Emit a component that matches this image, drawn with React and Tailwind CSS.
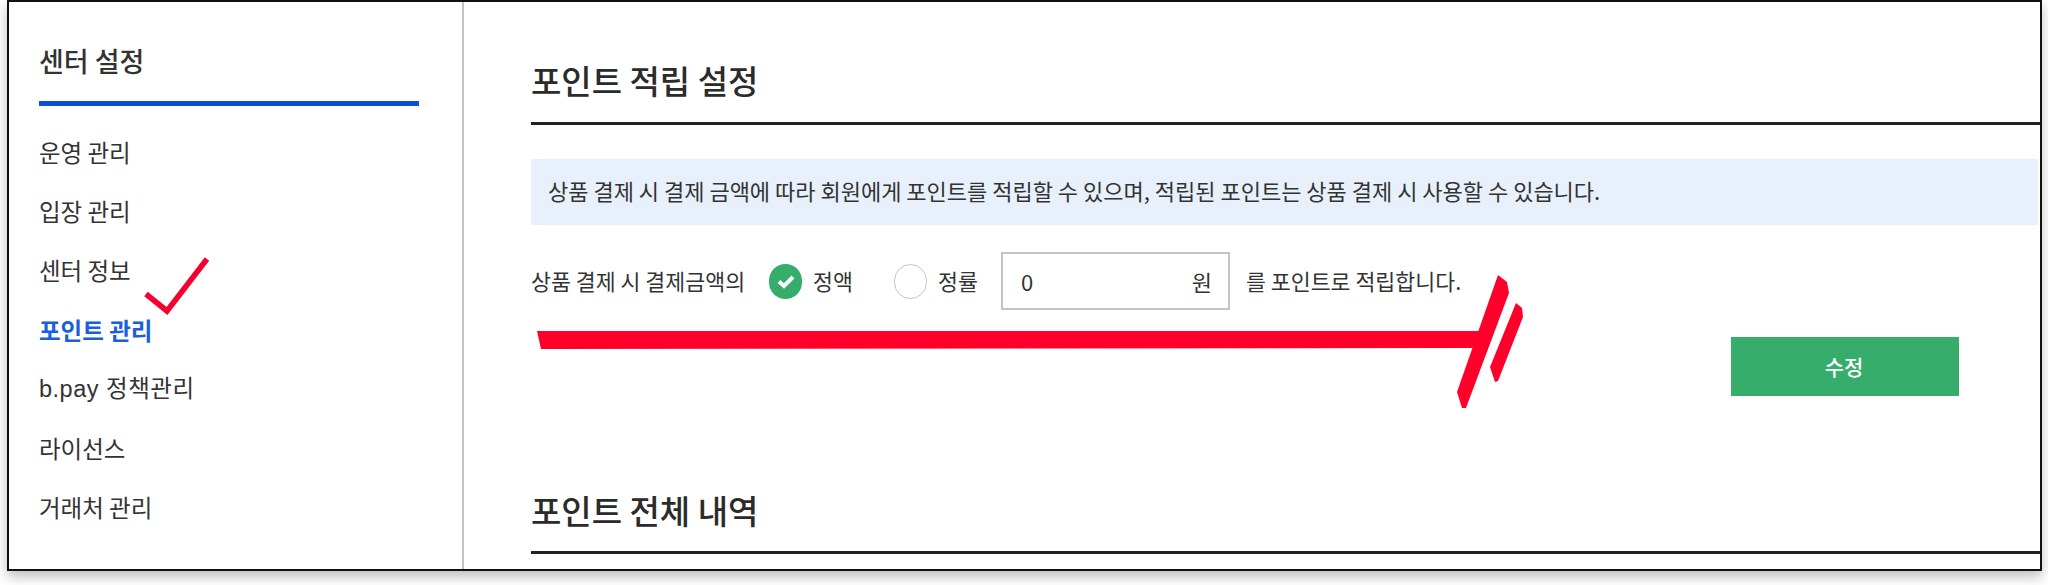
const FONT = "font-['Noto_Sans_CJK_KR','Noto_Sans',sans-serif]";

const menuItems = ["운영 관리", "입장 관리", "센터 정보", "포인트 관리", "b.pay 정책관리", "라이선스", "거래처 관리"];

const Annotations = () => (
  <svg className="pointer-events-none absolute left-0 top-0" width="2048" height="585" viewBox="0 0 2048 585">
    <path d="M146 294 L167 311 L207 259" fill="none" stroke="#f5002f" strokeWidth="5.5" />
    <path d="M537 331 L1482 331 L1474 348 L541 349 Z" fill="#ff002b" />
    <path d="M1498 275 L1507 282 L1509 293 L1466 408 L1462 408 L1457 392 Z" fill="#ff002b" />
    <path d="M1516 303 L1522 308 L1523 317 L1498 381 L1495 382 L1490 367 Z" fill="#ff002b" />
  </svg>
);

const SectionTitle = ({ children, className = "" }) => (
  <h2 className={`border-b-[3px] border-[#222222] text-[33px] font-medium leading-[40px] text-[#2b2b2b] ${className}`}>{children}</h2>
);

const Radio = ({ checked, label, className = "" }) => (
  <label className={`flex items-center gap-[11px] ${className}`}>
    {checked ? (
      <span className="flex h-[35px] w-[33px] items-center justify-center rounded-full bg-[#36ad6b]">
        <svg width="18" height="15" viewBox="0 0 18 15">
          <path d="M2 7.5 L7 12 L16 3" fill="none" stroke="#ffffff" strokeWidth="4" />
        </svg>
      </span>
    ) : (
      <span className="h-[35px] w-[33px] rounded-full border border-[#c4c4c4] bg-white" />
    )}
    <span>{label}</span>
  </label>
);

const App = () => {
  return (
    <div className={`relative h-[585px] w-[2048px] overflow-hidden bg-white ${FONT}`}>
      <div className="ml-[7px] flex h-[571px] w-[2035px] border-2 border-[#111111] bg-white shadow-[0_6px_12px_rgba(0,0,0,0.25)]">
        <aside className="w-[455px] shrink-0 border-r-2 border-[#c4c4c4] pl-[30px] pt-[41px]">
          <h1 className="text-[27px] font-medium leading-[36px] text-[#333333]">센터 설정</h1>
          <div className="mt-[22px] h-[5px] w-[380px] bg-[#0b4fd8]" />
          <ul className="mt-[17px]">
            {menuItems.map((item) => (
              <li
                key={item}
                className={`flex h-[59.2px] items-center text-[23.5px] ${
                  item === "포인트 관리" ? "font-bold text-[#1a5fdc]" : "text-[#333333]"
                } ${item.startsWith("b.pay") ? "font-['Liberation_Sans','Noto_Sans_CJK_KR',sans-serif] tracking-[0.5px]" : ""}`}
              >
                {item}
              </li>
            ))}
          </ul>
        </aside>
        <main className="min-w-0 flex-1 pl-[67px] pt-[58px]">
          <SectionTitle className="h-[65px] pb-[20px]">포인트 적립 설정</SectionTitle>
          <div className="mr-[2px] mt-[34px] flex h-[66px] items-center bg-[#e8f1fb] pb-[3px] pl-[17px] text-[22px] text-[#333333]">
            상품 결제 시 결제 금액에 따라 회원에게 포인트를 적립할 수 있으며, 적립된 포인트는 상품 결제 시 사용할 수 있습니다.
          </div>
          <div className="mt-[27px] flex h-[58px] items-center text-[21.7px] text-[#333333]">
            <span>상품 결제 시 결제금액의</span>
            <Radio checked label="정액" className="ml-[24px]" />
            <Radio label="정률" className="ml-[41px]" />
            <div className="ml-[23px] flex h-[58px] w-[229px] items-center justify-between border-2 border-[#c4c4c4] pl-[18px] pr-[16px] text-[22px]">
              <span>0</span>
              <span>원</span>
            </div>
            <span className="ml-[16px]">를 포인트로 적립합니다.</span>
          </div>
          <div className="flex justify-end pr-[81px] pt-[27px]">
            <button className="h-[59px] w-[228px] bg-[#36ad6b] pr-[2px] text-[21px] font-medium text-white">수정</button>
          </div>
          <SectionTitle className="mt-[94px] h-[64px] pb-[16px]">포인트 전체 내역</SectionTitle>
        </main>
      </div>
      <Annotations />
    </div>
  );
};

export default App;
